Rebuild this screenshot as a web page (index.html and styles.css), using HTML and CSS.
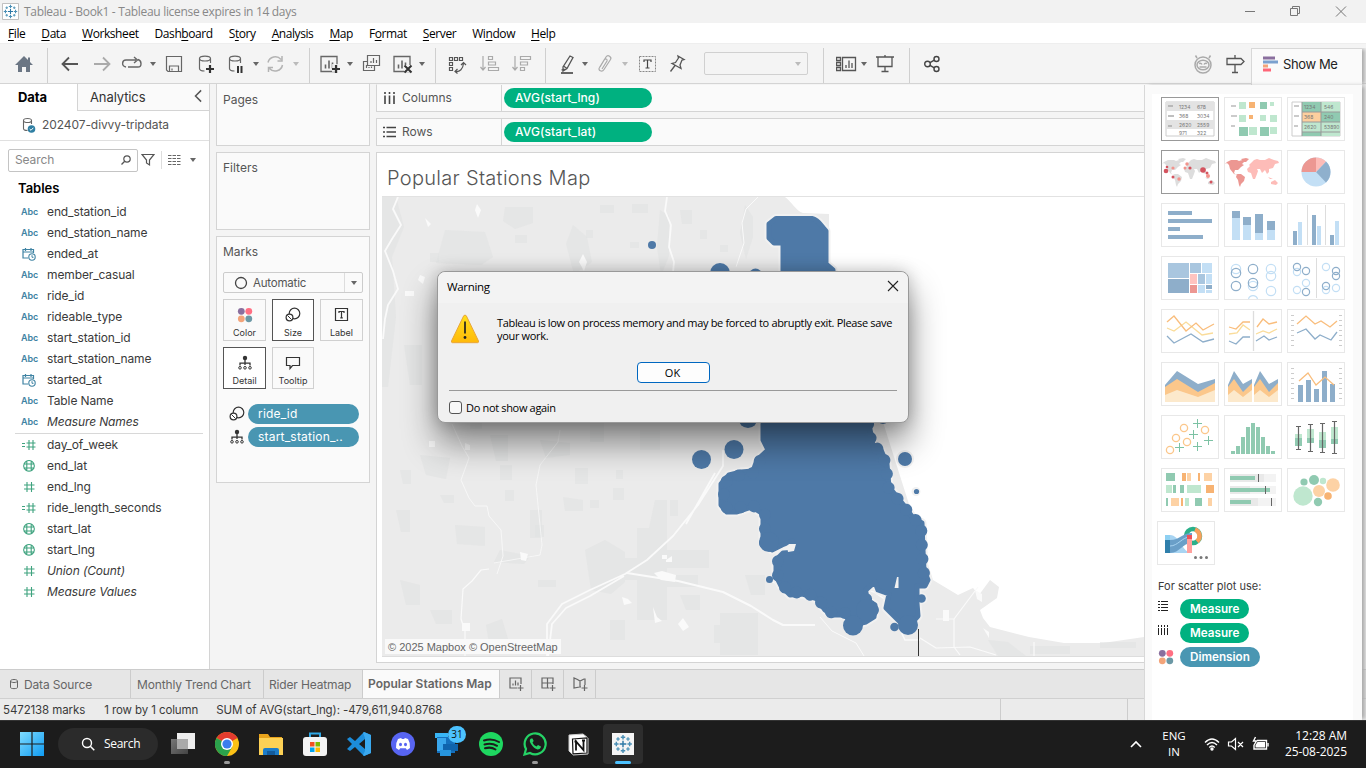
FILE: index.html
```html
<!DOCTYPE html>
<html lang="en">
<head>
<meta charset="utf-8">
<title>Tableau - Book1</title>
<link rel="stylesheet" href="styles.css">
</head>
<body>
<svg class="defs" width="0" height="0">
  <defs>
    <symbol id="caret" viewBox="0 0 8 6"><path d="M1 1h6L4 5z" fill="currentColor"/></symbol>
    <symbol id="cal" viewBox="0 0 14 14"><path d="M11.5 6V2.5H1V11h5M1 5h10.5M3.5 1v3M9 1v3" fill="none" stroke="#3f83a3" stroke-width="1.2"/><circle cx="10" cy="10" r="3.2" fill="#fff" stroke="#3f83a3" stroke-width="1.1"/><path d="M10 8.2V10.300h1.500" fill="none" stroke="#3f83a3"/></symbol>
    <symbol id="hash" viewBox="0 0 14 14"><path d="M5 2v10M9.500 2v10M2 5h10.500M2 9h10.500" fill="none" stroke="#3fa37f" stroke-width="1.1"/></symbol>
    <symbol id="chash" viewBox="0 0 14 14"><path d="M7 2v10M11 2v10M4.500 5h9M4.500 9h9M0 5.500h3M0 8.500h3" fill="none" stroke="#3fa37f" stroke-width="1.1"/></symbol>
    <symbol id="globe" viewBox="0 0 14 14"><path d="M7 1.500a5.300 5.300 0 1 0 .01 0zM4.800 2v10M9.200 2v10M1.500 5h11M1.500 9h11" fill="none" stroke="#3fa37f" stroke-width="1.100"/></symbol>
    <symbol id="size" viewBox="0 0 16 16"><circle cx="9.500" cy="6.500" r="5.300" fill="none" stroke="#333" stroke-width="1.200"/><circle cx="4.500" cy="10.500" r="3.400" fill="#fff" stroke="#333" stroke-width="1.200"/><path d="M2.500 8.500l4 4" stroke="#333"/></symbol>
    <symbol id="detail" viewBox="0 0 16 16"><circle cx="8" cy="3" r="2.200" fill="#333"/><path d="M8 4v6M3 10.500V8.200h10v2.300" fill="none" stroke="#333" stroke-width="1.300"/><g fill="none" stroke="#333"><circle cx="3" cy="12.800" r="1.300"/><circle cx="8" cy="12.800" r="1.300"/><circle cx="13" cy="12.800" r="1.300"/></g></symbol>
    <symbol id="dots" viewBox="0 0 16 16"><circle cx="4.300" cy="4.300" r="3.400" fill="#8a6f9e"/><circle cx="11.800" cy="4.300" r="3.400" fill="#ff6f83"/><circle cx="4.300" cy="11.800" r="3.400" fill="#f3a47a"/><circle cx="11.800" cy="11.800" r="3.400" fill="#6b98a5"/></symbol>
    <symbol id="tab" viewBox="0 0 18 18"><g stroke="#2d78a6" stroke-width="1.300"><path d="M9 6v6M6 9h6"/><path d="M9 1v4M7 3h4M9 13v4M7 15h4M1 9h4M3 7v4M13 9h4M15 7v4" stroke="#4a8fb5"/><path d="M4.500 3v3M3 4.500h3M13.500 3v3M12 4.500h3M4.500 12v3M3 13.500h3M13.500 12v3M12 13.500h3" stroke="#5b9cbd"/></g></symbol>
    <symbol id="world" viewBox="0 0 56 42">
      <path fill="currentColor" d="M2 11l4-2 6 0 2 1 3-1 2 2-2 2 2 1-3 2-3 3-3 0-1 3 2 2 2 0-4-1-4-5-1-4-2-2-2 1zM12 23l4 0 4 3-1 4-3 3-1 3-1-2-1-5-2-3zM16 8l5-1 3 1-3 3-2 0z"/>
      <path d="M26 12l3-3 3-1 3 1 5 0 4-2 5 2 4 1 1 2-4 1-2 4-4 1 0 3-2 2-2-4-3 3-2-4-3 0 1 2-1 3-2 5-2 0-2-6-3-1-1-3 3-3-1-1zM46 31l4-2 3 3-2 2-5-1zM43 26l5 2-3 0z"/>
    </symbol>
    <symbol id="bars" viewBox="0 0 22 22"><path d="M3 3.500h16v15H3z" fill="none" stroke="#666" stroke-width="1.300"/><path d="M7.500 15.500v-4M11 15.500v-8M14.500 15.500v-6" stroke="#666" stroke-width="1.600"/></symbol>
    <symbol id="db" viewBox="0 0 22 22"><path d="M4.500 5.500v10c0 2 3 2.500 5 2.500M15.500 5.500V10M4.500 5.500c0-3.300 11-3.300 11 0s-11 3.300-11 0z" fill="none" stroke="#666" stroke-width="1.200"/></symbol>
  </defs>
</svg>

<div class="app">
  <header class="titlebar">
    <svg class="logo" width="17" height="17" viewBox="0 0 18 18"><path d="M.5.500h17v17H.5z" fill="#fff" stroke="#bbb"/><use href="#tab" x="1" y="1" width="16" height="16"/></svg>
    <span>Tableau - Book1 - Tableau license expires in 14 days</span>
    <svg class="winbtns" width="106" height="22" viewBox="0 0 106 22" fill="none" stroke="#777"><path d="M3 10.500h10M48.500 7.500h7v7h-7zM50.500 7.500v-2h7v7h-2M94 5.500l10 10M104 5.500l-10 10"/></svg>
  </header>
  <nav class="menubar">
    <span><u>F</u>ile</span><span><u>D</u>ata</span><span><u>W</u>orksheet</span><span>Dash<u>b</u>oard</span><span>S<u>t</u>ory</span><span><u>A</u>nalysis</span><span><u>M</u>ap</span><span>F<u>o</u>rmat</span><span><u>S</u>erver</span><span>Wi<u>n</u>dow</span><span><u>H</u>elp</span>
  </nav>

  <div class="toolbar">
    <svg class="ic m13" viewBox="0 0 22 22"><path d="M11 3L2 12h3v7h4v-5h4v5h4v-7h3l-3-3V4.500h-2V7z" fill="#6b7684"/></svg>
    <i class="vr m12"></i>
    <svg class="ic m11" viewBox="0 0 22 22"><path d="M19 11H4M10 4.500L3.500 11l6.500 6.500" fill="none" stroke="#555" stroke-width="1.800"/></svg>
    <svg class="ic m10" viewBox="0 0 22 22"><path d="M3 11h15M12 4.500l6.500 6.500-6.500 6.500" fill="none" stroke="#aaa" stroke-width="1.800"/></svg>
    <svg class="ic m8" viewBox="0 0 22 22"><path d="M5 14c-5-1-4-7 0-7h10M13 4l3.500 3L13 10M17 6.500c4 1 4 7.500 0 7.500H7" fill="none" stroke="#666" stroke-width="1.400"/></svg>
    <svg class="cr m6"><use href="#caret"/></svg>
    <svg class="ic m6" viewBox="0 0 22 22"><path d="M3.500 3.500h15v15H5l-1.500-1.500zM6.500 18v-5h9v5M9 15.500v2" fill="none" stroke="#666" stroke-width="1.200"/></svg>
    <svg class="ic m10" viewBox="0 0 22 22"><use href="#db"/><path d="M15 12v8M11 16h8" stroke="#333" stroke-width="2.200"/></svg>
    <svg class="ic m10" viewBox="0 0 22 22"><use href="#db" x="-2"/><path d="M11 13v7M14.500 13v7" stroke="#333" stroke-width="2"/></svg>
    <svg class="cr m3"><use href="#caret"/></svg>
    <svg class="ic m4" viewBox="0 0 22 22"><path d="M4 9.500a7.500 7.500 0 0 1 13-3M18.500 12a7.500 7.500 0 0 1-13 3.500M18 3v5h-4.500M4.500 19v-4.500H9" fill="none" stroke="#b3b3b3" stroke-width="1.500"/></svg>
    <svg class="cr m6 dim"><use href="#caret"/></svg>
    <i class="vr m9"></i>
    <svg class="ic m9" viewBox="0 0 22 22"><use href="#bars" x="-1"/><path d="M13 11h8v8h-8z" fill="#f4f4f4" opacity=".8"/><path d="M17 12v8M13 16h8" stroke="#333" stroke-width="2.200"/></svg>
    <svg class="cr m5"><use href="#caret"/></svg>
    <svg class="ic m6" viewBox="0 0 22 22"><path d="M7.500 2.500h12v10h-12zM7 8.500H3.500v9h11v-5M11 10V8M13.500 10V5M16.500 10V7M6.500 15v-3M9 15v-1M11.500 15v-1.500" fill="none" stroke="#666" stroke-width="1.200"/></svg>
    <svg class="ic m10" viewBox="0 0 22 22"><use href="#bars" x="-1"/><path d="M12 12h8v7h-8z" fill="#f4f4f4"/><path d="M12.500 12.500l7 7M19.500 12.500l-7 7" stroke="#333" stroke-width="2"/></svg>
    <svg class="cr m4"><use href="#caret"/></svg>
    <i class="vr m9"></i>
    <svg class="ic m10" viewBox="0 0 22 22"><path d="M3.500 4.500h3v3h-3zM8.500 4.500h3v3h-3zM13.500 4.500h3v3h-3zM3.500 9.500h3v3h-3zM3.500 14.500h3v3h-3zM9 18.500c5 1 8-3 8.500-8M15 12l2.500-2.500L20 12M11.500 16L9 18.500l2.500 2" fill="none" stroke="#555" stroke-width="1.200"/></svg>
    <svg class="ic m11" viewBox="0 0 22 22"><path d="M4 3v14M1.500 14L4 17l2.500-3M9.500 3.500h4v3h-4zM9.500 9h7v3h-7zM9.500 14.500h10v3h-10z" fill="none" stroke="#aaa" stroke-width="1.200"/></svg>
    <svg class="ic m10" viewBox="0 0 22 22"><path d="M4 3v14M1.500 14L4 17l2.500-3M9.500 3.500h10v3h-10zM9.500 9h7v3h-7zM9.500 14.500h4v3h-4z" fill="none" stroke="#aaa" stroke-width="1.200"/></svg>
    <i class="vr m12"></i>
    <svg class="ic m11" viewBox="0 0 22 22"><path d="M13 3l3 1.500-6 11L6 18V14zM6.500 13l3.500 2.500M4.500 17l3-1" fill="none" stroke="#555" stroke-width="1.300"/><path d="M4 20h12" stroke="#555" stroke-width="1.800"/></svg>
    <svg class="cr m2"><use href="#caret"/></svg>
    <svg class="ic m5" viewBox="0 0 22 22"><path d="M6 14l6-10c2-3 6 0 4.500 2.500l-6.500 10c-2 3-6.500 1-4.500-2l5-8c1.500-1.500 3 0 2.500 1.500l-5 8" fill="none" stroke="#aaa" stroke-width="1.200"/></svg>
    <svg class="cr m5 dim"><use href="#caret"/></svg>
    <svg class="ic m7" viewBox="0 0 22 22"><path d="M3.500 3.500h16v15h-16z" fill="none" stroke="#888" stroke-dasharray="2 1"/><path d="M8 9V7h7v2M11.500 7v8M9.500 15h4" fill="none" stroke="#444" stroke-width="1.200"/></svg>
    <svg class="ic m8" viewBox="0 0 22 22"><path d="M12 3l6 3.500-2 .5-2 5 1 3.500-9-5 3.500-1 3-4.500zM9 12.500L4.500 18.500" fill="none" stroke="#555" stroke-width="1.300"/></svg>
    <div class="combo"><svg class="cr dim"><use href="#caret"/></svg></div>
    <i class="vr m15"></i>
    <svg class="ic m12" viewBox="0 0 22 22"><path d="M.5 4.500h4v3h-4zM.5 9.500h4v3h-4zM.5 14.500h4v3h-4zM6.500 4.500h13v13h-13zM10 15v-3M13 15V7.500M16 15v-5" fill="none" stroke="#555" stroke-width="1.300"/></svg>
    <svg class="cr m2"><use href="#caret"/></svg>
    <svg class="ic m6" viewBox="0 0 22 22"><path d="M2 4h18M4 4.500v9h14v-9M11 13.500v5M7.500 18.500h7M11 2v2" fill="none" stroke="#555" stroke-width="1.300"/></svg>
    <i class="vr m13"></i>
    <svg class="ic m11" viewBox="0 0 22 22"><g fill="none" stroke="#444" stroke-width="1.400"><circle cx="6.500" cy="11" r="2.800"/><circle cx="15.500" cy="6" r="2.500"/><circle cx="15.500" cy="16" r="2.500"/><path d="M9 9.700l4.300-2.500M9 12.300l4.300 2.500"/></g></svg>
    <svg class="ic push" viewBox="0 0 22 22"><g fill="none" stroke="#aaa" stroke-width="1.500"><circle cx="11" cy="12" r="8"/><ellipse cx="11" cy="12" rx="6" ry="4.800"/><path d="M5 5L3.500 2.500M17 5l1.500-2.500M7 10.500q2-1 3 1M15 10.500q-2-1-3 1M7.500 14h7"/></g></svg>
    <svg class="ic m10" viewBox="0 0 22 22"><path d="M3 5.500h14l3 3-3 3H3zM11 2v3.500M11 11.500v8M8 19.500h6" fill="none" stroke="#555" stroke-width="1.300"/></svg>
  </div>

  <main class="work">
    <aside class="side">
      <div class="tabs2"><b>Data</b><span>Analytics</span><svg width="8" height="12" viewBox="0 0 8 12"><path d="M6.500 1.500L2 6l4.500 4.500" fill="none" stroke="#555" stroke-width="1.200"/></svg></div>
      <div class="source">
        <svg width="14" height="17" viewBox="0 0 14 17"><path d="M1.500 3.500v8c0 1.500 2 2 4 2M9.500 3.500V7M1.500 3.500c0-2.700 8-2.700 8 0s-8 2.700-8 0z" fill="none" stroke="#666" stroke-width="1.100"/><circle cx="9.500" cy="12" r="3.800" fill="#2f7fa3"/><path d="M7.700 12l1.300 1.300 2.300-2.500" fill="none" stroke="#fff"/></svg>
        <span>202407-divvy-tripdata</span>
      </div>
      <div class="find">
        <div class="box"><span>Search</span><svg width="12" height="12" viewBox="0 0 12 12"><circle cx="7" cy="5" r="3.200" fill="none" stroke="#555" stroke-width="1.200"/><path d="M4.700 7.300L1.500 10.500" stroke="#555" stroke-width="1.300"/></svg></div>
        <svg width="14" height="14" viewBox="0 0 14 14"><path d="M1 1.500h12L8.500 7v5L5.500 10V7z" fill="none" stroke="#555" stroke-width="1.200"/></svg>
        <i></i>
        <svg width="13" height="12" viewBox="0 0 13 12"><path d="M0 1.500h13M0 4.500h13M0 7.500h13M0 10.500h13" stroke="#666" stroke-dasharray="3.500 1"/></svg>
        <svg class="cr"><use href="#caret"/></svg>
      </div>
      <h3>Tables</h3>
      <ul class="fields">
        <li><em>Abc</em>end_station_id</li>
        <li><em>Abc</em>end_station_name</li>
        <li><svg><use href="#cal"/></svg>ended_at</li>
        <li><em>Abc</em>member_casual</li>
        <li><em>Abc</em>ride_id</li>
        <li><em>Abc</em>rideable_type</li>
        <li><em>Abc</em>start_station_id</li>
        <li><em>Abc</em>start_station_name</li>
        <li><svg><use href="#cal"/></svg>started_at</li>
        <li><em>Abc</em>Table Name</li>
        <li class="it"><em>Abc</em>Measure Names</li>
      </ul>
      <ul class="fields meas">
        <li><svg><use href="#chash"/></svg>day_of_week</li>
        <li><svg><use href="#globe"/></svg>end_lat</li>
        <li><svg><use href="#hash"/></svg>end_lng</li>
        <li><svg><use href="#chash"/></svg>ride_length_seconds</li>
        <li><svg><use href="#globe"/></svg>start_lat</li>
        <li><svg><use href="#globe"/></svg>start_lng</li>
        <li class="it"><svg><use href="#hash"/></svg>Union (Count)</li>
        <li class="it"><svg><use href="#hash"/></svg>Measure Values</li>
      </ul>
    </aside>

    <section class="cards">
      <div class="card pages">Pages</div>
      <div class="card filters">Filters</div>
      <div class="card marks">Marks
        <div class="select"><svg width="14" height="14" viewBox="0 0 14 14"><circle cx="7" cy="7" r="5.500" fill="none" stroke="#444" stroke-width="1.300"/></svg><span>Automatic</span><i><svg class="cr"><use href="#caret"/></svg></i></div>
        <div class="mgrid">
          <div><svg><use href="#dots"/></svg>Color</div>
          <div class="on"><svg><use href="#size"/></svg>Size</div>
          <div><svg viewBox="0 0 16 16"><path d="M1.500 1.500h12v12h-12zM5 6V4.500h5V6M7.500 4.500v6.300M6.300 10.800h2.500" fill="none" stroke="#333" stroke-width="1.200"/></svg>Label</div>
          <div class="on"><svg><use href="#detail"/></svg>Detail</div>
          <div><svg viewBox="0 0 16 16"><path d="M1.500 2.500h13v8H7.500L5 13.500v-3H1.500z" fill="none" stroke="#333" stroke-width="1.200"/></svg>Tooltip</div>
        </div>
        <div class="mpill"><svg><use href="#size"/></svg><span>ride_id</span></div>
        <div class="mpill"><svg><use href="#detail"/></svg><span>start_station_..</span></div>
      </div>
    </section>

    <section class="view">
      <div class="shelf"><label><svg width="13" height="13" viewBox="0 0 13 13"><path d="M2 0v2M2 3.500V12M6.500 0v2M6.500 3.500V12M11 0v2M11 3.500V12" stroke="#444" stroke-width="1.600"/></svg>Columns</label><b>AVG(start_lng)</b></div>
      <div class="shelf"><label><svg width="13" height="13" viewBox="0 0 13 13"><path d="M0 1.500h2M3.500 1.500H13M0 6h2M3.500 6H13M0 10.500h2M3.500 10.500H13" stroke="#444" stroke-width="1.600"/></svg>Rows</label><b>AVG(start_lat)</b></div>
      <div class="sheet">
        <h1>Popular Stations Map</h1>
        <div class="map">
          <svg width="762" height="460" viewBox="382 197 762 460">
            <path d="M382 197H785C791 201 796 211 803 213L829 214V275L876 400L933 580L958 595L973 588L979 595L990 580L999 587L997 598L980 610L983 618L990 627L1029 637L1064 643L1103 643L1144 637V657H382z" fill="#ebebeb"/>
            <path d="M382 197h14l8 30-12 30 4 60-8 70h-6zM445 230l40 2 8 25-12 8-45-2zM505 207h28v16l-18 6-12-8zM573 225l14 12 5 25-18 12-8-30zM660 210l9 6v40l-8 20-4-30zM680 210h12v14h-10zM745 205l8 12v20l-7 22-6-26zM600 205h14v8h-14zM632 204h16v9h-16zM404 345h18v40h-12zM455 525l30 2v19l-28-2zM500 465h12v15h-12zM540 440l30 3v12l-24 3zM490 435h18v26h-12zM585 550l20-10 20 12v30l-14 12-20-4zM655 500h12v120h-30v-40h-14v-22h14v-30h12zM640 575h58v12h-58zM720 613h38v42h-38v-12h-6v-18h6zM500 550l30 6-6 8-30-2zM420 455l30 3-4 21-20-4zM665 550h44v18h-44zM640 430h20v20h-20zM563 497l20 3v11h-18zM530 510h12v28h-12zM613 488h11v12h-11zM486 625l16-6 6 20-18 10zM988 640l20 2 18 14h-28zM400 580l20 5v20h-14zM396 510h14v22h-9z" fill="#dfe1e1" opacity=".5"/>
            <path d="M430 253h9v9h-9zM545 315h11v12h-11zM630 242h9v6h-9zM470 300h20v12h-20zM590 420h14v22h-14zM575 468h13v16h-13zM670 500h8v16h-8zM538 580h18v7h-18zM680 595h20v15h-14zM745 575h20v20h-14zM610 620h15v20h-15zM430 610h22v14h-16zM1030 646h40v8h-40zM1100 642h36v6h-36zM470 420h12v9h-12zM505 490h9v11h-9zM440 495h14v8h-10zM535 525h9v12h-9zM590 500h9v8h-9zM616 470h7v9h-7zM400 470h11v14h-8zM515 235h12v8h-12zM586 230h7v8h-7zM700 230h7v9h-7zM720 245h8v7h-8z" fill="#e0e2e2" opacity=".55"/>
            <g fill="none" stroke="#fafafa" stroke-width="1.800" stroke-linejoin="round">
              <path d="M398 197l-5 12 8 16-9 14-7 12 8 20 5 18-10 16-3 14-2 20" />
              <path d="M667 197l-2 14 6 14-2 22 5 15-2 20"/>
              <path d="M758 197l-12 12-4 14 2 20-8 24" stroke-width="1"/>
              <path d="M723 450v16L698 505 673 536 647 560 625 574 590 590 562 604 547 624V657M624 576L590 596 566 608 552 624 548 657M715 473L686 524"/>
              <path d="M627 573l51 8 45 11 28 14 22 14 10 5h32" stroke-width="2"/>
              <path d="M489 569l-8 1-9 11-9 8-2 30 4 12v26" stroke-width="1.200"/>
              <path d="M452 424l10 22 7 12-8 22 8 18 6 8h12l2 10 12 14 2 26-6 18" stroke-width=".8"/>
              <path d="M560 430l-2 12-18 23-4 20 6 60-2 10-46 8" stroke-width=".7"/>
              <path d="M1034 642v14M978 587l-24 32h-18M954 619v28l6 8M920 638l16 10 34-1 26 8" stroke-width="1.200"/>
              <path d="M820 617l12 14 24 12 8 13" stroke-width="1"/>
            </g>
            <path d="M477 204l4 6-3 8-3-8zM425 218l6 6-3 3zM579 262l4-8 4 8-3 9zM420 275l5 2-2 7-5-4zM405 291h9v5h-9zM429 441h6v6h-6zM465 443l5 2v5h-5zM520 552l8 2-2 7-5-1zM654 573l8-2 14 4-1 7-14-2zM662 555h5v4h-5zM666 560l6-4v6h-6zM622 597l6 2 4 4-8 2zM653 607l4 10 5 4-7 2zM678 624l5-6 6 9-6 4zM462 623h8v8h-8zM943 610h6v11h-6zM975 590l7 4v8l-5-3zM983 628l6 4v6z" fill="#fafafa"/>
            <path d="M769 580L790 590 820 604 840 616 858 606 866 590 874 592 886 600 905 640 920 640" fill="none" stroke="#fafafa" stroke-width="1.500"/>
            <g stroke="#f1f1f1" stroke-width="4"><circle cx="905" cy="459" r="7"/><circle cx="916" cy="491.500" r="2.500"/><circle cx="921.500" cy="598.500" r="4"/></g>
            <defs><path id="city" d="M776 218.500H812C819 220 821 226 826 231V264L833 270V290L860 405 869 424 873 446 881 450 887 464 889 487 898 498 906 508 913 518 922 523 923 550 924 570 928 580 925 586 917 586 917 603 918 616 910 625 902 624 895 617 886 608 889 594 878 590 875 582 866 590 866 600 875 605 874 617 866 622 853 625 845 615 832 615 825 610 817 599 802 594 790 595 781 586 776 576 776 560 783 553 797 552 792 541 782 545 772 550 763 544 763 514 752 507 737 512 727 512 721 505 721 484 729 475 741 472 753 471 757 460 768 450 763 440 763 424 783 400 783 266 783 243H774L769 238V224z"/></defs>
            <use href="#city" fill="#f1f1f1" stroke="#f1f1f1" stroke-width="9" stroke-linejoin="round"/>
            <use href="#city" fill="#4e79a7" stroke="#4e79a7" stroke-width="5" stroke-linejoin="round"/>
            <path d="M868 424L872 446 880 450 886 464 888 487 897 498 905 508 912 518 921 523 922 550 923 570 926 580M866 599L873 605 873 617M845 613L832 613 825 608 817 597 802 592 790 593 782 584 778 576 778 560 783 555M765 543L765 514 752 505 737 508 727 508 724 503 724 484 731 477 741 475 753 473 759 462 768 450" fill="none" stroke="#4e79a7" stroke-width="12" stroke-linecap="round" stroke-dasharray=".1 14"/>
            <path d="M897 577h1.500v11h-4zM787 546l2-2h7l-2 7-6 1z" fill="#f1f1f1"/>
            <g fill="#4e79a7"><circle cx="652" cy="245" r="4"/><circle cx="720" cy="273" r="10"/><circle cx="755.500" cy="275" r="6.500"/><circle cx="701.500" cy="459.500" r="9.500"/><circle cx="734" cy="449.500" r="9.500"/><circle cx="748" cy="418.500" r="9.500"/><circle cx="905" cy="459" r="7"/><circle cx="916.500" cy="491.500" r="2.600"/><circle cx="883" cy="418" r="6"/><circle cx="769.500" cy="579.500" r="3.500"/><circle cx="853" cy="625.500" r="10"/><circle cx="769" cy="542" r="10"/><circle cx="908" cy="625" r="10"/><circle cx="921.500" cy="598.500" r="4.300"/><circle cx="894.500" cy="627" r="4.300"/><circle cx="867" cy="610" r="11"/></g>
            <path d="M918.500 629v27" stroke="#333"/>
          </svg>
          <span class="attrib">© 2025 Mapbox © OpenStreetMap</span>
        </div>
      </div>
    </section>
  </main>

  <div class="sheets">
    <span class="ds"><svg width="10" height="12" viewBox="0 0 10 12"><path d="M1.500 3v6.500c0 1.500 7 1.500 7 0V3M1.500 3c0-2 7-2 7 0s-7 2-7 0z" fill="none" stroke="#666"/></svg>Data Source</span>
    <span class="s1">Monthly Trend Chart</span>
    <span class="s2">Rider Heatmap</span>
    <b>Popular Stations Map</b>
    <i><svg viewBox="0 0 16 16"><path d="M9 12H2V2h11v6M5 9.500v-2M7.500 9.500v-5M10 9.500v-3M12.500 9v6M9.500 12h6" /></svg></i>
    <i><svg viewBox="0 0 16 16"><path d="M9 12H2V2h11v6M2 7h11M7.500 2v10M12.500 9v6M9.500 12h6"/></svg></i>
    <i><svg viewBox="0 0 16 16"><path d="M9 11H7.500L2 12V2l3.500 1.500L8 5l4-2h1v6M8 5v6M12.500 9v6M9.500 12h6"/></svg></i>
  </div>
  <div class="status"><span>5472138 marks</span><span>1 row by 1 column</span><span class="sum">SUM of AVG(start_lng): -479,611,940.8768</span><i></i><i></i></div>

  <footer class="taskbar">
    <svg class="ti win" viewBox="0 0 24 24"><path d="M0 0h11.400v11.400H0zM12.600 0H24v11.400H12.600zM0 12.600h11.400V24H0zM12.600 12.600H24V24H12.600z" fill="url(#gw)"/><defs><linearGradient id="gw" x2="1" y2="1"><stop stop-color="#7fdcff"/><stop offset="1" stop-color="#0f9bf2"/></linearGradient></defs></svg>
    <div class="tsearch"><svg width="14" height="14" viewBox="0 0 14 14"><circle cx="6" cy="6" r="4.500" fill="none" stroke="#fff" stroke-width="1.400"/><path d="M9.300 9.300L13.300 13.300" stroke="#fff" stroke-width="1.500"/></svg>Search</div>
    <div class="apps">
      <span><svg viewBox="0 0 24 24"><defs><linearGradient id="gt" x2="1" y2="1"><stop stop-color="#777"/><stop offset="1" stop-color="#444"/></linearGradient></defs><path d="M6 1h18v16H6z" fill="#eee"/><path d="M0 7h17v15H0z" fill="url(#gt)"/><path d="M6 7h11v10H6z" fill="#aaa"/></svg></span>
      <span class="run"><svg viewBox="0 0 24 24"><circle cx="12" cy="12" r="12" fill="#fbc116"/><path d="M12 12L1.600 6A12 12 0 0 1 22.400 6z" fill="#e33b2e"/><path d="M12 12L1.600 6A12 12 0 0 0 12 24l5.200-9z" fill="#2ba24c"/><path d="M12 6h10.400l-1-1.500H12z" fill="#e33b2e"/><circle cx="12" cy="12" r="6" fill="#fff"/><circle cx="12" cy="12" r="4.600" fill="#3b7ded"/></svg></span>
      <span><svg viewBox="0 0 24 24"><path d="M0 2h9l2 3h12v6H0z" fill="#e8a31b"/><path d="M0 6h24v17H0z" fill="#fdd155"/><path d="M4 23v-5q0-2 2-2h12q2 0 2 2v5z" fill="#1c7cc9"/><path d="M8 19h8v4H8z" fill="#135b9c"/></svg></span>
      <span><svg viewBox="0 0 24 24"><path d="M7 6V1.500h10V6" fill="none" stroke="#2fa8e6" stroke-width="2"/><rect y="5" width="24" height="19" rx="3" fill="#f3f3f3"/><path d="M7 10h4.500v4.500H7z" fill="#f25022"/><path d="M12.500 10H17v4.500h-4.500z" fill="#7fba00"/><path d="M7 15.500h4.500V20H7z" fill="#00a4ef"/><path d="M12.500 15.500H17V20h-4.500z" fill="#ffb900"/></svg></span>
      <span><svg viewBox="0 0 24 24"><path d="M17 0l7 3v18l-7 3-9-9-5 4-3-2 5-5-5-5 3-2 5 4zM18 7l-6 5 6 5z" fill="#1c8ddb"/><path d="M17 0l7 3v18l-7 3-1-1 2-4V6l-2-5z" fill="#3aa9ef"/></svg></span>
      <span><svg viewBox="0 0 24 24"><circle cx="12" cy="12" r="12" fill="#5865f2"/><path d="M7 7l3-1 1 1h2l1-1 3 1q2.500 4 2 9l-3 2-1.200-1.800H9.200L8 18l-3-2q-.5-5 2-9z" fill="#fff"/><ellipse cx="9.500" cy="12.500" rx="1.500" ry="1.700" fill="#5865f2"/><ellipse cx="14.500" cy="12.500" rx="1.500" ry="1.700" fill="#5865f2"/></svg></span>
      <span><svg viewBox="0 0 24 24"><path d="M0 1h13v5H0z" fill="#38b5f5"/><path d="M2 5h18v16H2z" fill="#1470bd"/><path d="M2 6h9v13H2z" fill="#3aa7ec"/><path d="M8 12h15v7H8z" fill="#0f64ad"/><path d="M5 18h11v6H5z" fill="#2795de"/></svg><em>31</em></span>
      <span><svg viewBox="0 0 24 24"><circle cx="12" cy="12" r="12" fill="#1ed760"/><path d="M5 8.500q8-2.500 15 1.500M5.500 12.500q7-2 12.500 1.300M6 16.300q6-1.800 10.500 1.200" fill="none" stroke="#1c1c1c" stroke-width="2" stroke-linecap="round"/></svg></span>
      <span class="run"><svg viewBox="0 0 24 24"><path d="M1.500 22.500L3 17A10.500 10.500 0 1 1 7 21z" fill="none" stroke="#25d366" stroke-width="2.200"/><path d="M8 6.500q-2.500 2 0 5.500 3 4.500 6.500 5.500 3 0 3.500-3l-3-1.500-1.500 1.500q-3-1-4-4l1.200-1.500L9.500 6.500z" fill="#25d366"/></svg></span>
      <span><svg viewBox="0 0 24 24"><path d="M2 3l14-1 5 4v16l-15 1-4-4z" fill="#fff" stroke="#ccc"/><path d="M5.500 7L20 6v15L6 21.800z" fill="#fff" stroke="#111" stroke-width="1.200"/><path d="M9 18.500V9.500l7.500 8.500V8.500M7.500 9.500H10M15 8.500h3" fill="none" stroke="#111" stroke-width="1.800"/></svg></span>
      <span class="act"><svg viewBox="0 0 24 24"><path d="M1 1h22v22H1z" fill="#f5f5f5"/><use href="#tab" x="2" y="2" width="20" height="20"/></svg></span>
    </div>
    <svg class="up" width="12" height="8" viewBox="0 0 12 8"><path d="M1 7l5-5 5 5" fill="none" stroke="#fff" stroke-width="1.600"/></svg>
    <div class="lang">ENG<br>IN</div>
    <svg class="tray" width="66" height="16" viewBox="0 0 66 16" fill="none" stroke="#fff" stroke-width="1.400"><path d="M1 6.500q7-7 14 0M3 9q5-5 10 0M5.300 11.500q2.700-3 5.400 0"/><circle cx="8" cy="13" r="1" fill="#fff"/><path d="M24.500 6h3l4-3.500v11l-4-3.500h-3zM34 6l5 5M39 6l-5 5" stroke-width="1.200"/><path d="M53 4.500h9.500v8.500H50V9"/><path d="M53.500 6h7.500v5.500h-9.500V9z" fill="#fff" stroke="none"/><path d="M64 7v3.500M51.500 1l-2 4h3l-2.500 4" /></svg>
    <div class="clock">12:28 AM<br>25-08-2025</div>
  </footer>
</div>

<aside class="showme">
  <div class="smtab"><svg width="15" height="16" viewBox="0 0 15 16"><path d="M0 .5h12v3H0z" fill="#8a6f9e"/><path d="M0 4.500h15v3H0z" fill="#7ba1cf"/><path d="M0 8.500h5v3H0z" fill="#f3a47a"/><path d="M0 12.500h8v3H0z" fill="#ff6678"/></svg>Show Me</div>
  <div class="smbody"><div class="smin">
    <div class="thumbs">
      <svg class="on" viewBox="0 0 56 42"><path d="M4 4h48v34H4z" fill="#fff" stroke="#ccc"/><path d="M4 4h48v9H4zM4 22h48v9H4z" fill="#e3e3e3"/><path d="M6 8h5M6 18h6M6 28h4" stroke="#aaa" stroke-width="1.500"/><g class="nums"><text x="17" y="11">1234</text><text x="35" y="11">678</text><text x="17" y="20">368</text><text x="35" y="20">3034</text><text x="17" y="29">2620</text><text x="35" y="29">2559</text><text x="17" y="37">971</text><text x="35" y="37">322</text></g></svg>
      <svg viewBox="0 0 56 42"><path d="M6 8h5M6 18h6M6 28h4" stroke="#bbb" stroke-width="1.500"/><path d="M14 4h7v7h-7zM45 4h4v4h-4zM14 17h7v7h-7zM35 17h6v6h-6zM45 17h7v7h-7zM24 29h8v8h-8zM45 29h7v7h-7z" fill="#bfe7cf"/><path d="M35 4h7v7h-7zM14 29h9v9h-9zM35 29h9v9h-9z" fill="#90cab1"/><path d="M24 4h6v6h-6zM24 17h4v4h-4z" fill="#f7b373"/></svg>
      <svg viewBox="0 0 56 42"><path d="M4 4h48v34H4z" fill="#fff" stroke="#ccc"/><path d="M14 4h19v10H14zM33 14h19v10H33zM14 34h19v4H14z" fill="#90cab1"/><path d="M33 4h19v10H33zM14 24h38v10H14zM33 34h19v4H33z" fill="#bfe7cf"/><path d="M14 14h19v10H14z" fill="#fdcf9e"/><path d="M14 4v34M33 4v34M14 14h38M14 24h38M14 34h38" stroke="#999"/><path d="M6 8h5M6 18h5M6 28h4" stroke="#bbb" stroke-width="1.500"/><g class="nums"><text x="16" y="11">1234</text><text x="36" y="11">546</text><text x="16" y="21">368</text><text x="36" y="21">240</text><text x="16" y="31">2620</text><text x="36" y="31">53890</text></g></svg>
      <svg class="on gmap" viewBox="0 0 56 42"><use href="#world"/><g fill="#d4545f"><circle cx="4" cy="20" r="2.300"/><circle cx="5" cy="16" r="1.300"/><circle cx="11" cy="26" r="1.500"/><circle cx="28" cy="17" r="1.600"/><circle cx="41" cy="19" r="2.800"/><circle cx="45" cy="22" r="1.500"/><circle cx="49" cy="31" r="1.500"/></g><g fill="#f2938c"><circle cx="11" cy="17" r="1.600"/><circle cx="17" cy="28" r="1.700"/><circle cx="23" cy="17" r="1.500"/><circle cx="25" cy="13" r="1.700"/><circle cx="46" cy="25" r="2"/></g></svg>
      <svg class="rmap" viewBox="0 0 56 42"><use href="#world"/></svg>
      <svg viewBox="0 0 56 42"><circle cx="28" cy="21" r="14.500" fill="#c3dff5"/><path d="M28 21L38 10.500A14.500 14.500 0 0 1 38 31.500z" fill="#8fb0cd"/><path d="M28 21V6.500a14.500 14.500 0 0 1 10 4z" fill="#fdbcb8"/><path d="M28 21H13.500A14.500 14.500 0 0 1 28 6.500z" fill="#ec9792"/></svg>
      <svg viewBox="0 0 56 42"><path d="M6 7h24v4H6zM6 15h44v4H6zM6 23h12v4H6zM6 31h35v4H6z" fill="#8eaeca"/></svg>
      <svg viewBox="0 0 56 42"><path d="M7 7h8v29H7zM18 13h8v23h-8zM30 10h8v26h-8zM42 17h8v19h-8z" fill="#c3dff5"/><path d="M7 7h8v7H7zM18 13h8v8h-8zM30 10h8v19h-8zM42 17h8v9h-8z" fill="#8eaeca"/></svg>
      <svg viewBox="0 0 56 42"><path d="M5 27h4v14H5zM24 11h4v30h-4zM42 31h4v10h-4z" fill="#8eaeca"/><path d="M10 18h4v23h-4zM29 22h4v19h-4zM47 17h4v24h-4z" fill="#c3dff5"/><path d="M19.500 1v40M37.500 1v40" stroke="#ddd"/></svg>
      <svg viewBox="0 0 56 42"><path d="M6 6h21v15H6zM28 6h11v10H28zM36 17h7v10h-7z" fill="#a9c6df"/><path d="M6 22h21v14H6zM44 28h6v4h-6z" fill="#8eaeca"/><path d="M40 6h10v10H40zM44 17h6v10h-6zM36 28h7v8h-7zM44 33h6v3h-6z" fill="#c3dff5"/><path d="M28 17h7v10h-7z" fill="#ffc4c0"/><path d="M28 28h7v8h-7z" fill="#ec9792"/></svg>
      <svg viewBox="0 0 56 42" fill="none"><g stroke="#c3dff5" stroke-width="1.200"><circle cx="11" cy="12" r="4.700"/><circle cx="46" cy="12" r="4.700"/><circle cx="46" cy="19" r="4.700"/><circle cx="28" cy="29" r="4.700"/><circle cx="46" cy="34" r="4.700"/><path d="M23.500 42a4.700 4.700 0 0 1 9 0"/></g><g stroke="#8eaeca" stroke-width="1.200"><circle cx="11" cy="16" r="4.700"/><circle cx="11" cy="29" r="4.700"/><circle cx="28" cy="12" r="4.700"/><circle cx="28" cy="26" r="4.700"/></g></svg>
      <svg viewBox="0 0 56 42" fill="none"><path d="M28.500 1v40" stroke="#ddd"/><g stroke="#c3dff5" stroke-width="1.200"><circle cx="9" cy="15" r="3.600"/><circle cx="9" cy="33" r="3.600"/><circle cx="18" cy="26" r="3.600"/><circle cx="38" cy="10" r="3.600"/><circle cx="38" cy="33" r="3.600"/><circle cx="48" cy="31" r="3.600"/></g><g stroke="#8eaeca" stroke-width="1.200"><circle cx="9" cy="10" r="3.600"/><circle cx="18" cy="14" r="3.600"/><circle cx="18" cy="35" r="3.600"/><circle cx="48" cy="14" r="3.600"/><circle cx="48" cy="19" r="3.600"/><circle cx="38" cy="29" r="3.600"/></g></svg>
      <svg viewBox="0 0 56 42" fill="none" stroke-width="1.300"><path d="M5 18l7 3 12-9 16 13 11-2" stroke="#fadc9a"/><path d="M5 12l7-6 12 15 10-8 7 7 11-6" stroke="#f9bd7c"/><path d="M5 26l7 7 17-9 12 8 11-3" stroke="#8eaeca"/></svg>
      <svg viewBox="0 0 56 42" fill="none" stroke-width="1.300"><path d="M28.500 1v40" stroke="#ddd"/><path d="M4 24l8-1 6-8 7 5M31 24l7-3 6 2 8-4" stroke="#fadc9a"/><path d="M4 17l7 2 7-7h7M32 17l6-8 6 5 8-2" stroke="#f9bd7c"/><path d="M4 31l7 3 7-7h7M31 31l8-5 5 4 8-3" stroke="#8eaeca"/></svg>
      <svg viewBox="0 0 56 42" fill="none" stroke-width="1.300"><path d="M4.500 5v34M52.500 5v34" stroke="#ccc" stroke-width="3" stroke-dasharray="1 4"/><path d="M9 14l9-8 9 8 6-3 9 6 7-6" stroke="#f9bd7c"/><path d="M9 23l9-4 9 10 5-4 11 5 6-8" stroke="#8eaeca"/></svg>
      <svg viewBox="0 0 56 42"><path d="M3 22L15 8l21 13 17-5v23H3z" fill="#8eaeca"/><path d="M3 24l12-8 21 13 17-9v19H3z" fill="#fbc78b"/><path d="M3 32l12-5 21 7 17-7v12H3z" fill="#fce9cc"/></svg>
      <svg viewBox="0 0 56 42"><path d="M3 22L9 8l9 13 9-5v23H3zM29 22l6-14 9 13 9-5v23H29z" fill="#8eaeca"/><path d="M3 24l6-8 9 13 9-9v19H3zM29 24l6-8 9 13 9-9v19H29z" fill="#fbc78b"/><path d="M3 32l6-5 9 7 9-7v12H3zM29 32l6-5 9 7 9-7v12H29z" fill="#fce9cc"/></svg>
      <svg viewBox="0 0 56 42"><path d="M4.500 5v34M52.500 5v34" stroke="#ccc" stroke-width="3" stroke-dasharray="1 4"/><path d="M10 22h5v17h-5zM18 17h5v22h-5zM26 26h5v13h-5zM34 8h5v31h-5zM42 21h5v18h-5z" fill="#8eaeca"/><path d="M11 18l9-8 8 12 9-8 9 8" fill="none" stroke="#f9bd7c" stroke-width="1.300"/></svg>
      <svg viewBox="0 0 56 42" fill="none"><g stroke="#fbc78b" stroke-width="1.300"><circle cx="22" cy="12" r="3.600"/><circle cx="43" cy="14" r="3.600"/><circle cx="14" cy="22" r="3.600"/><circle cx="25" cy="26" r="3.600"/><circle cx="8" cy="34" r="3.600"/></g><path d="M31 7.500h9M35.500 3v9M27 18.500h9M31.500 14v9M42 24.500h9M46.500 20v9M31 30.500h9M35.500 26v9M13 31.500h9M17.500 27v9" stroke="#7cc2a4"/></svg>
      <svg viewBox="0 0 56 42"><path d="M6 35h4v3H6zM11 30h4v8h-4zM16 21h4v17h-4zM21 11h4v27h-4zM26 7h4v31h-4zM31 11h4v27h-4zM36 21h4v17h-4zM41 30h4v8h-4zM46 35h4v3h-4z" fill="#90cab1"/></svg>
      <svg viewBox="0 0 56 42"><path d="M7 18h7v12H7zM19 13h7v14h-7zM31 16h7v16h-7zM43 11h7v17h-7z" fill="#bfe7cf"/><path d="M7 22h7v8H7zM19 22h7v5h-7zM31 24h7v8h-7zM43 23h7v5h-7z" fill="#90cab1"/><path d="M10.500 10.500v23M8 10.500h5M8 33.500h5M22.500 8.500v27M20 8.500h5M20 35.500h5M34.500 7.500v29M32 7.500h5M32 36.500h5M46.500 5.500v32M44 5.500h5M44 37.500h5" fill="none" stroke="#666" stroke-width="1.200"/></svg>
      <svg viewBox="0 0 56 42"><path d="M4 4h9v8H4zM11 16h3v8h-3zM18 16h4v8h-4zM4 29h2v8H4zM33 29h7v8h-7z" fill="#90cab1"/><path d="M4 16h6v8H4zM25 16h14v8H25zM23 29h4v8h-4z" fill="#bfe7cf"/><path d="M20 4h4v8h-4zM36 4h2v8h-2zM44 16h8v8h-8zM19 29h2v8h-2z" fill="#f7b373"/><path d="M25 4h4v8h-4zM42 4h8v8h-8zM9 29h8v8H9zM46 29h4v8h-4z" fill="#fdd2a5"/></svg>
      <svg viewBox="0 0 56 42"><path d="M5 5h46v8H5zM5 17h46v8H5zM5 29h46v8H5z" fill="#f3f3f3"/><path d="M5 5h34v8H5zM5 17h20v8H5zM5 29h28v8H5z" fill="#e9e9e9"/><path d="M5 7h25v4H5zM5 19h40v4H5zM5 31h21v4H5z" fill="#90cab1"/><path d="M33.500 5v8M40.500 17v8M46.500 29v8" stroke="#666"/></svg>
      <svg viewBox="0 0 56 42"><g fill="#90cab1"><circle cx="16" cy="13" r="3.600"/><circle cx="26" cy="11" r="5"/><circle cx="30" cy="33" r="4.200"/></g><g fill="#bfe7cf"><circle cx="15" cy="27" r="9.700"/><circle cx="35" cy="12" r="3.200"/></g><g fill="#fdd2a5"><circle cx="31" cy="22" r="6"/><circle cx="45" cy="16" r="6.800"/></g><circle cx="40" cy="27" r="3.800" fill="#f7b373"/></svg>
    </div>
    <svg class="ext" viewBox="0 0 56 42"><circle cx="35" cy="14" r="7" fill="none" stroke="#2bb08a" stroke-width="4.500"/><path d="M37 7.500a7 7 0 0 1 2 12" fill="none" stroke="#f9a05c" stroke-width="4.500"/><path d="M7 13h5c10 0 12 18 22 18H12z" fill="#a8d4f2"/><path d="M7 18h5c10 0 12-7 22-7v10c-10 0-12 10-22 10H7z" fill="#6a9fc8"/><path d="M12 24c8 0 12-9 20-9" fill="none" stroke="#a8d4f2"/><path d="M7 13h5v6H7z" fill="#8ed0f2"/><path d="M7 18h5v13H7z" fill="#2f7fab"/><path d="M29 13h5v18h-5z" fill="#ffa19d"/><path d="M29 13h5v4h-5z" fill="#ee5259"/><g fill="#777"><circle cx="37.500" cy="35.500" r="1.500"/><circle cx="43" cy="35.500" r="1.500"/><circle cx="48.500" cy="35.500" r="1.500"/></g></svg>
    <p>For scatter plot use:</p>
    <div class="need"><svg width="12" height="12" viewBox="0 0 12 12"><path d="M0 .5h2M3 .5H10M0 3.500h2M3 3.500H10M0 6.500h2M3 6.500H10M0 9.500h2M3 9.500H10" stroke="#222"/></svg><b>Measure</b></div>
    <div class="need"><svg width="12" height="12" viewBox="0 0 12 12"><path d="M.5 0v2M.5 3v7M3.500 0v2M3.500 3v7M6.500 0v2M6.500 3v7M9.500 0v2M9.500 3v7" stroke="#222"/></svg><b>Measure</b></div>
    <div class="need"><svg width="16" height="16"><use href="#dots"/></svg><b class="dim2">Dimension</b></div>
  </div></div>
</aside>

<div class="dialog">
  <div class="dhead"><span>Warning</span><svg width="12" height="12" viewBox="0 0 12 12"><path d="M1 1l10 10M11 1L1 11" stroke="#222" stroke-width="1.100"/></svg></div>
  <div class="dmsg">
    <svg width="30" height="30" viewBox="0 0 30 30"><defs><linearGradient id="gy" x2="0" y2="1"><stop stop-color="#ffe01a"/><stop offset="1" stop-color="#ffb90a"/></linearGradient></defs><path d="M13.700 1.800q1.300-1.500 2.600 0L28.500 27q.5 1.500-1 1.700h-25q-1.500-.2-1-1.700z" fill="url(#gy)" stroke="#e9a53a"/><path d="M15 7.500v12" stroke="#222" stroke-width="1.700"/><circle cx="15" cy="23.500" r="1.400" fill="#222"/></svg>
    <p>Tableau is low on process memory and may be forced to abruptly exit. Please save<br>your work.</p>
  </div>
  <button>OK</button>
  <div class="dfoot"><i></i>Do not show again</div>
</div>
</body>
</html>
```
FILE: styles.css
```css
*{box-sizing:border-box}
body{margin:0;width:1366px;height:768px;overflow:hidden;background:#f4f4f4;font:12px/16px Inter,Roboto,sans-serif;color:#3a3a3a;position:relative}
svg{display:block;flex:none}
.defs{position:absolute}
i,em{font-style:normal}
.app{display:flex;flex-direction:column;height:768px;white-space:nowrap}

.titlebar{height:23px;background:#f2f2f2;display:flex;align-items:center;font:12px "Open Sans",sans-serif;letter-spacing:-.32px;color:#888;padding:0 18px 0 2px;gap:5px}
.winbtns{margin-left:auto}
.menubar{height:20px;background:#fff;display:flex;align-items:center;gap:16px;padding:1px 8px 0;font:12px "Open Sans",sans-serif;letter-spacing:-.42px;color:#000}
.menubar u{text-underline-offset:2px}
.toolbar{height:41px;background:#f4f4f4;display:flex;align-items:center;border-top:1px solid #eee;border-bottom:1px solid #d4d4d4}
.ic{width:22px;height:22px}
.cr{width:8px;height:6px;color:#666}
.dim{color:#bbb}
.vr{width:1px;height:35px;background:#cfcfcf;align-self:flex-end}
.m2{margin-left:2px}.m3{margin-left:3px}.m4{margin-left:4px}.m5{margin-left:5px}.m6{margin-left:6px}.m7{margin-left:7px}.m8{margin-left:8px}.m9{margin-left:9px}.m10{margin-left:10px}.m11{margin-left:11px}.m12{margin-left:12px}.m13{margin-left:13px}.m15{margin-left:15px}
.push{margin-left:249px}
.combo{width:104px;height:23px;border:1px solid #d0d0d0;border-radius:2px;margin-left:16px;display:flex;align-items:center;justify-content:flex-end;padding-right:5px}

.work{height:585px;display:flex;gap:6px}
.side{width:210px;background:#fff;border-right:1px solid #d4d4d4}
.tabs2{display:flex;height:27px;line-height:26px;font-size:13px;letter-spacing:-.1px;color:#333}
.tabs2 b{width:77px;padding-left:18px;color:#000}
.tabs2 span{flex:1;border-left:1px solid #d4d4d4;border-bottom:1px solid #d4d4d4;background:#fafafa;padding-left:12px}
.tabs2 svg{align-self:stretch;width:16px;height:27px;padding:0 6px 2px 0;background:#fafafa;border-bottom:1px solid #d4d4d4}
.source{height:30px;display:flex;align-items:center;gap:6px;padding:0 0 1px 22px;border-bottom:1px solid #e0e0e0;color:#555;letter-spacing:-.08px}
.find{display:flex;align-items:center;padding:7px 0 0 8px;height:31px}
.find .box{width:130px;height:23px;border:1px solid #c4c4c4;border-radius:2px;display:flex;align-items:center;justify-content:space-between;padding:0 5px 0 6px;color:#888;margin-right:3px;letter-spacing:-.1px}
.find>i{width:1px;height:18px;background:#ddd;margin:0 6px}
.find>.cr{margin-left:8px}
.side h3{margin:0;height:29px;padding:8px 0 0 18px;font:600 13px/16px Inter,sans-serif;color:#000}
.fields{list-style:none;margin:0;padding:0;letter-spacing:-.12px}
.fields li{height:21px;display:flex;align-items:center;padding-left:21px}
.fields em,.fields svg{width:26px;flex:none}
.fields em{color:#3f83a3;font-size:9px;font-weight:600;font-style:normal;letter-spacing:-.1px;padding-top:1px}
.fields svg{width:14px;height:14px;margin:0 11px 0 1px}
.it{font-style:italic}
.meas{margin:1px 6px 0 15px;border-top:1px solid #d8d8d8}
.meas li{padding-left:6px}

.cards{width:154px;display:flex;flex-direction:column;gap:6px;color:#555}
.card{border:1px solid #d4d4d4;background:#fafafa;padding:7px 6px}
.pages{height:62px;border-top:0;padding-top:8px}
.filters{height:78px}
.marks{height:247px}
.select{height:21px;border:1px solid #ccc;border-radius:2px;display:flex;align-items:center;margin:12px 0 6px;font-size:11.500px;letter-spacing:-.2px;padding-left:10px;gap:5px}
.select i{margin-left:auto;width:18px;height:19px;border-left:1px solid #ddd;display:flex;align-items:center;justify-content:center}
.mgrid{display:grid;grid-template-columns:43px 42px 43px;gap:6px}
.mgrid div{height:42px;border:1px solid #d0d0d0;text-align:center;font-size:9px;line-height:12px;padding-top:7px;color:#333}
.mgrid .on{border-color:#555;background:#fff}
.mgrid svg{width:16px;height:16px;margin:0 auto 4px}
.mgrid+.mpill{margin-top:15px}
.mpill{display:flex;align-items:center;height:20px;margin:0 0 3px 6px;gap:3px}
.mpill svg{width:16px;height:16px}
.mpill span{width:111px;height:20px;border-radius:10px;background:#4996b2;color:#fff;padding-left:10px;line-height:20px;letter-spacing:.2px}

.view{width:768px;display:flex;flex-direction:column}
.shelf{height:28px;border:1px solid #d4d4d4;border-right:0;background:#fafafa;display:flex;align-items:center;margin-bottom:6px}
.shelf:first-child{border-top-color:#f4f4f4}
.shelf label{width:125px;align-self:stretch;display:flex;align-items:center;border-right:1px solid #d4d4d4;padding-left:6px;gap:6px;color:#555}
.shelf b{width:148px;height:20px;border-radius:10px;background:#00b180;color:#fff;margin-left:2px;padding-left:11px;line-height:20px;font-weight:500;letter-spacing:.1px}
.sheet{height:511px;background:#fff;border:1px solid #d4d4d4;border-right:0;padding-left:5px}
.sheet h1{margin:0;height:43px;padding:9px 0 0 5px;font:300 20px/32px Inter,sans-serif;color:#555;letter-spacing:.3px}
.map{position:relative;border-top:1px solid #e2e2e2;border-bottom:1px solid #ddd;height:461px;overflow:hidden}
.attrib{position:absolute;left:3px;bottom:2px;background:#f9f9f9;height:15px;padding:0 3px;font:11px/17px "Liberation Sans",sans-serif;color:#666}

.sheets{height:30px;background:#e6e6e6;border-top:1px solid #ccc;border-bottom:1px solid #d0d0d0;display:flex;line-height:29px;color:#666;letter-spacing:-.15px}
.sheets>*{border-right:1px solid #ccc;padding-left:6px}
.sheets .ds{width:131px;display:flex;align-items:center;gap:5px;padding-left:9px}
.sheets .s1{width:133px}.sheets .s2{width:99px;padding-left:5px}
.sheets b{width:137px;background:#fafafa;padding-left:5px;font-weight:600;letter-spacing:0;line-height:28px}
.sheets i{width:32px;padding:6px 0 0 8px}
.sheets i svg{width:16px;height:16px;fill:none;stroke:#666;stroke-width:1.200}
.status{height:21px;background:#ebebeb;display:flex;font-size:11.500px;line-height:22px;padding-left:3px;gap:19px;letter-spacing:-.1px}
.status i{border-left:1px solid #ccc;height:21px}
.status .sum{width:765px;margin-left:-1px}.status i+i{margin-left:107px}

.taskbar{height:48px;background:#1c1c1c;border-top:1px solid #333;display:flex;align-items:center;color:#fff;font:12px/16px "Open Sans",sans-serif;padding-bottom:1px}
.win{width:24px;height:24px;margin-left:20px}
.tsearch{width:100px;height:32px;border-radius:16px;background:#2b2b2b;margin-left:14px;display:flex;align-items:center;padding-left:23px;gap:9px;letter-spacing:-.3px}
.apps{display:flex;margin-left:3px}
.apps span{width:44px;height:40px;position:relative;display:flex;align-items:center;justify-content:center}
.apps svg{width:24px;height:24px}
.apps .act{background:#2d2d2d;border-radius:4px;width:40px;margin-left:2px}
.apps .run::after,.act::after{content:"";position:absolute;bottom:0;left:19px;width:6px;height:3px;border-radius:2px;background:#999}
.apps .act::after{left:12px;width:16px;background:#4cc2ff}
.apps em{position:absolute;left:23px;top:2px;width:18px;height:17px;border-radius:9px;background:#4cc2ff;color:#111;font-size:10px;line-height:17px;text-align:center}
.up{margin-left:487px}
.lang{width:32px;text-align:center;margin-left:16px;font-size:11.500px}
.tray{margin-left:14px}
.clock{text-align:right;margin-left:auto;margin-right:19px;letter-spacing:-.05px}

.showme{position:absolute;left:1144px;top:48px;width:218px;height:672px;clip-path:inset(0 -6px 0 0)}
.smtab{width:111px;height:37px;margin-left:107px;background:#fafafa;border:1px solid #d8d8d8;border-bottom:0;border-right:0;display:flex;align-items:center;gap:5px;padding:0 0 6px 11px;font-size:13px;color:#222;letter-spacing:-.4px;box-shadow:4px 0 4px -1px #aaa}
.smbody{height:635px;background:#fafafa;border-left:1px solid #d8d8d8;padding:9px 9px 0 7px;box-shadow:4px 0 4px -1px #aaa}
.smin{background:#fff;height:626px;padding:3px 0 0 5px}
.thumbs{display:grid;grid-template-columns:58px 58px 58px;gap:9px 5px;margin-left:4px}
.thumbs svg,.ext{width:58px;height:44px;border:1px solid #e8e8e8;background:#fff}
.thumbs .on{border-color:#999}
.ext{margin-top:9px}
.nums{font:5px Inter,sans-serif;fill:#777}
.gmap{fill:#ddd;color:#ddd}
.rmap{fill:#fdbcb8;color:#ec9792}
.smin p{margin:13px 0 5px 1px;font-size:11px}
.need{display:flex;align-items:center;height:20px;margin-bottom:4px;padding-left:1px}
.need svg{width:16px}
.need svg[width="12"]{width:12px;margin:0 4px 4px 0}
.need b{margin-left:6px;height:20px;line-height:20px;border-radius:10px;padding:0 10px;background:#00b180;color:#fff;font-weight:600;font-size:11.700px}
.need .dim2{background:#4996b2}

.dialog{position:absolute;left:437px;top:271px;width:472px;height:152px;background:#f0f0f0;border:1px solid #999;border-radius:8px;box-shadow:0 20px 34px rgba(0,0,0,.45),0 0 16px rgba(0,0,0,.2);font:11px/13px "Open Sans",sans-serif;letter-spacing:-.33px;color:#000}
.dhead{height:31px;background:#f3f3f3;border-radius:8px 8px 0 0;display:flex;align-items:center;justify-content:space-between;padding:0 9px 3px;font-size:11.500px}
.dmsg{display:flex;gap:17px;padding:11px 0 0 12px;height:58px}
.dmsg p{margin:2px 0 0;white-space:nowrap}
.dialog button{display:block;width:73px;height:21px;margin:1px 0 0 199px;background:#fdfdfd;border:1px solid #0067c0;border-radius:4px;font:inherit;padding:0 2px 0 0;color:#000}
.dfoot{margin:7px 11px 0;border-top:1px solid #999;display:flex;align-items:center;gap:4px;height:34px}
.dfoot i{width:13px;height:13px;border:1px solid #555;border-radius:3px;background:#f8f8f8}
```
